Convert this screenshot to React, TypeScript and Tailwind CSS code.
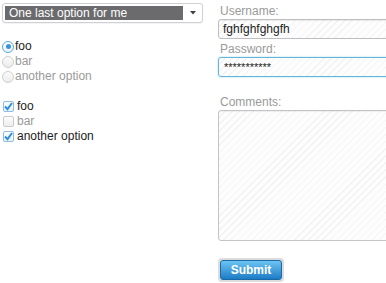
import React from "react";

const stripes =
  "bg-[repeating-linear-gradient(135deg,#fdfdfd_0px,#fdfdfd_4px,#f3f3f3_4px,#f3f3f3_5px)]";

function Radio({ checked, label, disabled }: { checked?: boolean; label: string; disabled?: boolean }) {
  return (
    <div className="flex h-[15px] items-center">
      <div
        className={
          checked
            ? "ml-[2px] flex h-[12px] w-[12px] items-center justify-center rounded-full border border-[#5aa9dc] bg-gradient-to-b from-[#ffffff] to-[#eaf4fb]"
            : "ml-[2px] h-[12px] w-[12px] rounded-full border border-[#cfcfcf] bg-gradient-to-b from-[#fbfbfb] to-[#ececec]"
        }
      >
        {checked && <div className="h-[5px] w-[5px] rounded-full bg-[#3b93e0]" />}
      </div>
      <span className={"ml-[1px] text-[12px] leading-[15px] " + (disabled ? "text-[#9a9a9a]" : "text-[#222]")}>
        {label}
      </span>
    </div>
  );
}

function Check({ checked, label, disabled }: { checked?: boolean; label: string; disabled?: boolean }) {
  return (
    <div className="flex h-[15px] items-center">
      <div
        className={
          checked
            ? "ml-[3px] flex h-[11px] w-[11px] items-center justify-center rounded-[2px] border border-[#8dbde0] bg-gradient-to-b from-[#ffffff] to-[#e6f1f9]"
            : "ml-[3px] h-[11px] w-[11px] rounded-[2px] border border-[#cacaca] bg-gradient-to-b from-[#fdfdfd] to-[#ededed]"
        }
      >
        {checked && (
          <svg width="9" height="9" viewBox="0 0 9 9">
            <path d="M1 4.5 L3.5 7.2 L8 1" fill="none" stroke="#2f8fdd" strokeWidth="2" />
          </svg>
        )}
      </div>
      <span className={"ml-[3px] text-[12px] leading-[15px] " + (disabled ? "text-[#9a9a9a]" : "text-[#222]")}>
        {label}
      </span>
    </div>
  );
}

export default function App() {
  return (
    <div className="flex h-[283px] w-[386px] overflow-hidden bg-white font-['Liberation_Sans',Arial,sans-serif]">
      <div className="w-[216px] shrink-0">
        <div className="ml-[2px] mt-[3px] flex h-[20px] w-[201px] items-center rounded-[3px] border border-[#cfd0d4] bg-white pl-[2px] shadow-[0_1px_1px_rgba(0,0,0,0.05)]">
          <div className="h-[14px] w-[178px] bg-[#6b6b6e] pl-[4px] text-[12px] leading-[14px] text-white">
            One last option for me
          </div>
          <div className="flex flex-1 items-center justify-center">
            <svg width="6" height="4" viewBox="0 0 6 4">
              <path d="M0 0 L6 0 L3 3.5 Z" fill="#3a3f4a" />
            </svg>
          </div>
        </div>
        <div className="mt-[16px]">
          <Radio checked label="foo" />
          <Radio label="bar" disabled />
          <Radio label="another option" disabled />
        </div>
        <div className="mt-[15px]">
          <Check checked label="foo" />
          <Check label="bar" disabled />
          <Check checked label="another option" />
        </div>
      </div>
      <div className="shrink-0 pt-[4px] pl-[2px]">
        <div className="h-[15px] pl-[2px] text-[12px] leading-[15px] text-[#9a9a9a]">Username:</div>
        <div
          className={
            "flex h-[20px] w-[200px] items-center rounded-[3px] border border-[#bdbdc2] pl-[4px] text-[12px] text-[#222] shadow-[inset_0_1px_1px_rgba(0,0,0,0.08)] " +
            stripes
          }
        >
          fghfghfghgfh
        </div>
        <div className="mt-[3px] h-[15px] pl-[2px] text-[12px] leading-[15px] text-[#9a9a9a]">Password:</div>
        <div
          className={
            "flex h-[20px] w-[200px] items-center rounded-[3px] border border-[#62b6d9] pl-[5px] text-[11px] text-[#222] shadow-[0_0_2px_rgba(98,182,217,0.6)] " +
            stripes
          }
        >
          ***********
        </div>
        <div className="mt-[18px] h-[15px] pl-[2px] text-[12px] leading-[15px] text-[#9a9a9a]">Comments:</div>
        <div
          className={
            "h-[131px] w-[200px] rounded-[3px] border border-[#c4c4c8] shadow-[inset_0_1px_1px_rgba(0,0,0,0.06)] " +
            stripes
          }
        />
        <div className="mt-[17px] flex h-[24px] w-[66px] items-center justify-center rounded-[4px] bg-[#dcdcdc] p-[2px]">
          <div className="flex h-full w-full items-center justify-center rounded-[3px] border border-[#1b6aa8] bg-gradient-to-b from-[#6cc4f2] to-[#1a7cc6] text-[12px] font-bold text-white">
            Submit
          </div>
        </div>
      </div>
    </div>
  );
}
